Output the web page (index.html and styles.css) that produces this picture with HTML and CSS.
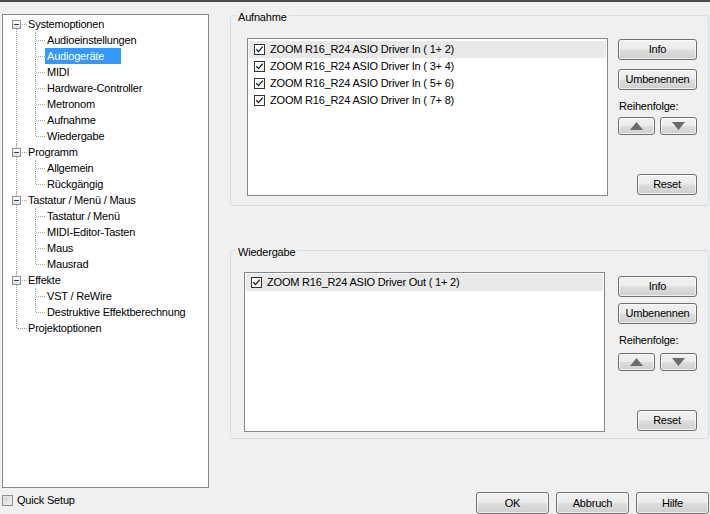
FILE: index.html
```html
<!DOCTYPE html>
<html lang="de">
<head>
<meta charset="utf-8">
<title>Optionen</title>
<link rel="stylesheet" href="styles.css">
</head>
<body>
<div class="topline"></div>
<div class="main">
  <div class="left">
    <ul class="tree">
      <li>
        <div class="row"><span class="exp"></span><span class="label">Systemoptionen</span></div>
        <ul class="children">
          <li><div class="row"><span class="label">Audioeinstellungen</span></div></li>
          <li><div class="row"><span class="label selected">Audiogeräte</span></div></li>
          <li><div class="row"><span class="label">MIDI</span></div></li>
          <li><div class="row"><span class="label">Hardware-Controller</span></div></li>
          <li><div class="row"><span class="label">Metronom</span></div></li>
          <li><div class="row"><span class="label">Aufnahme</span></div></li>
          <li><div class="row"><span class="label">Wiedergabe</span></div></li>
        </ul>
      </li>
      <li>
        <div class="row"><span class="exp"></span><span class="label">Programm</span></div>
        <ul class="children">
          <li><div class="row"><span class="label">Allgemein</span></div></li>
          <li><div class="row"><span class="label">Rückgängig</span></div></li>
        </ul>
      </li>
      <li>
        <div class="row"><span class="exp"></span><span class="label">Tastatur / Menü / Maus</span></div>
        <ul class="children">
          <li><div class="row"><span class="label">Tastatur / Menü</span></div></li>
          <li><div class="row"><span class="label">MIDI-Editor-Tasten</span></div></li>
          <li><div class="row"><span class="label">Maus</span></div></li>
          <li><div class="row"><span class="label">Mausrad</span></div></li>
        </ul>
      </li>
      <li>
        <div class="row"><span class="exp"></span><span class="label">Effekte</span></div>
        <ul class="children">
          <li><div class="row"><span class="label">VST / ReWire</span></div></li>
          <li><div class="row"><span class="label">Destruktive Effektberechnung</span></div></li>
        </ul>
      </li>
      <li>
        <div class="row"><span class="label">Projektoptionen</span></div>
      </li>
    </ul>
    <label class="quick"><span class="cb cb-plain"></span><span>Quick Setup</span></label>
  </div>

  <div class="right">
    <section class="group group-rec">
      <div class="group-title">Aufnahme</div>
      <div class="group-body">
        <div class="listbox">
          <div class="item sel"><span class="cb"><svg width="9" height="9" viewBox="0 0 9 9"><path d="M1.3 4.3 L3.5 6.6 L7.8 1.6" stroke="#1a1a1a" stroke-width="1.3" fill="none"/></svg></span>ZOOM R16_R24 ASIO Driver In ( 1+ 2)</div>
          <div class="item"><span class="cb"><svg width="9" height="9" viewBox="0 0 9 9"><path d="M1.3 4.3 L3.5 6.6 L7.8 1.6" stroke="#1a1a1a" stroke-width="1.3" fill="none"/></svg></span>ZOOM R16_R24 ASIO Driver In ( 3+ 4)</div>
          <div class="item"><span class="cb"><svg width="9" height="9" viewBox="0 0 9 9"><path d="M1.3 4.3 L3.5 6.6 L7.8 1.6" stroke="#1a1a1a" stroke-width="1.3" fill="none"/></svg></span>ZOOM R16_R24 ASIO Driver In ( 5+ 6)</div>
          <div class="item"><span class="cb"><svg width="9" height="9" viewBox="0 0 9 9"><path d="M1.3 4.3 L3.5 6.6 L7.8 1.6" stroke="#1a1a1a" stroke-width="1.3" fill="none"/></svg></span>ZOOM R16_R24 ASIO Driver In ( 7+ 8)</div>
        </div>
        <div class="side">
          <button class="btn">Info</button>
          <button class="btn btn-rename">Umbenennen</button>
          <div class="order-label">Reihenfolge:</div>
          <div class="arrows">
            <button class="btn arrow"><svg width="13" height="8" viewBox="0 0 13 8"><polygon points="0,8 6.5,0 13,8" fill="#6b6b6b"/></svg></button>
            <button class="btn arrow"><svg width="13" height="8" viewBox="0 0 13 8"><polygon points="0,0 13,0 6.5,8" fill="#6b6b6b"/></svg></button>
          </div>
          <button class="btn btn-reset">Reset</button>
        </div>
      </div>
    </section>

    <section class="group group-play">
      <div class="group-title">Wiedergabe</div>
      <div class="group-body">
        <div class="listbox">
          <div class="item sel"><span class="cb"><svg width="9" height="9" viewBox="0 0 9 9"><path d="M1.3 4.3 L3.5 6.6 L7.8 1.6" stroke="#1a1a1a" stroke-width="1.3" fill="none"/></svg></span>ZOOM R16_R24 ASIO Driver Out ( 1+ 2)</div>
        </div>
        <div class="side">
          <button class="btn">Info</button>
          <button class="btn btn-rename">Umbenennen</button>
          <div class="order-label">Reihenfolge:</div>
          <div class="arrows">
            <button class="btn arrow"><svg width="13" height="8" viewBox="0 0 13 8"><polygon points="0,8 6.5,0 13,8" fill="#6b6b6b"/></svg></button>
            <button class="btn arrow"><svg width="13" height="8" viewBox="0 0 13 8"><polygon points="0,0 13,0 6.5,8" fill="#6b6b6b"/></svg></button>
          </div>
          <button class="btn btn-reset">Reset</button>
        </div>
      </div>
    </section>

    <div class="dialog-buttons">
      <button class="btn">OK</button>
      <button class="btn">Abbruch</button>
      <button class="btn">Hilfe</button>
    </div>
  </div>
</div>
</body>
</html>
```

FILE: styles.css
```css
* { box-sizing: border-box; }
html, body { margin: 0; padding: 0; }
body {
  width: 710px;
  height: 514px;
  overflow: hidden;
  background: #f0f0f0;
  font-family: "Liberation Sans", Arial, sans-serif;
  font-size: 11px;
  line-height: 13px;
  letter-spacing: -0.2px;
  color: #000;
}
.topline { height: 2px; background: #4a4a4a; }
.main { display: flex; height: 512px; }

/* ---------- left: tree ---------- */
.left {
  width: 209px;
  padding: 12px 0 0 2px;
  display: flex;
  flex-direction: column;
}
.tree, .tree ul { list-style: none; margin: 0; padding: 0; }
.tree {
  height: 474px;
  padding-top: 1px;
  background: #fff;
  border: 1px solid #828790;
}
.tree li { position: relative; }
.row {
  position: relative;
  height: 16px;
  line-height: 16px;
  display: flex;
  white-space: nowrap;
}
.tree > li > .row { padding-left: 23px; }
.children > li > .row { padding-left: 42px; }
.label { padding: 0 2px; height: 16px; }
.label.selected { background: #3399ff; color: #fff; padding-right: 17px; }

/* connector lines */
.tree > li::before,
.children > li::before {
  content: "";
  position: absolute;
  top: 0;
  bottom: 0;
  border-left: 1px dotted #a0a0a0;
}
.tree > li::before { left: 13px; }
.children > li::before { left: 32px; }
.tree > li:first-child::before { top: 8px; }
.tree > li:last-child::before,
.children > li:last-child::before { bottom: auto; height: 8px; }

.tree > li > .row::before,
.children > li > .row::before {
  content: "";
  position: absolute;
  top: 8px;
  border-top: 1px dotted #a0a0a0;
}
.tree > li > .row::before { left: 14px; width: 10px; }
.children > li > .row::before { left: 33px; width: 9px; }

.exp {
  position: absolute;
  left: 9px;
  top: 4px;
  width: 9px;
  height: 9px;
  border: 1px solid #919191;
  background: linear-gradient(#ffffff, #e2e2e2);
  z-index: 1;
}
.exp::after {
  content: "";
  position: absolute;
  left: 1px;
  top: 3px;
  width: 5px;
  height: 1px;
  background: #2c3d5e;
}

/* checkboxes */
.cb {
  width: 11px;
  height: 11px;
  flex: none;
  border: 1px solid #333;
  background: #fff;
  display: flex;
  align-items: center;
  justify-content: center;
}
.cb-plain {
  border-color: #8e8f8f;
  background: linear-gradient(135deg, #cfcfcf, #f6f6f6);
  box-shadow: inset 0 0 0 1px #e6e6e6;
}
.quick {
  display: flex;
  align-items: center;
  height: 13px;
  margin-top: 6px;
  gap: 4px;
}

/* ---------- right: groups ---------- */
.right {
  margin-left: 21px;
  width: 479px;
  padding-top: 13px;
  display: flex;
  flex-direction: column;
}
.group {
  border: 1px solid #d5dfe5;
  border-radius: 3px;
}
.group-title {
  margin: -5px 0 0 5px;
  padding: 0 2px;
  width: max-content;
  background: #f0f0f0;
  line-height: 13px;
}
.group-body { display: flex; }
.group-rec .group-body { padding: 14px 11px 9px 16px; }
.group-play { margin-top: 44px; }
.group-play .group-body { padding: 13px 11px 6px 13px; }

.listbox {
  width: 361px;
  height: 158px;
  background: #fff;
  border: 1px solid #828790;
  padding: 2px 1px 1px;
}
.group-play .listbox { height: 160px; padding-top: 1px; }
.item {
  height: 17px;
  display: flex;
  align-items: center;
  padding-left: 5px;
  white-space: nowrap;
}
.item .cb { margin-right: 5px; }
.item.sel { background: #e9e9e9; }

.side {
  width: 79px;
  margin-left: 10px;
  display: flex;
  flex-direction: column;
  padding: 1px 0 1px;
}
.group-play .side { margin-left: 13px; padding-top: 4px; }

.btn {
  font: inherit;
  letter-spacing: inherit;
  color: #000;
  height: 21px;
  padding: 0;
  margin: 0;
  border: 1px solid #707070;
  border-radius: 3px;
  background: linear-gradient(#f2f2f2 0%, #ebebeb 48%, #dddddd 52%, #cfcfcf 100%);
  box-shadow: inset 0 0 0 1px rgba(255, 255, 255, 0.65);
  display: flex;
  align-items: center;
  justify-content: center;
}
.btn-rename { margin-top: 9px; }
.group-play .btn-rename { margin-top: 6px; }
.order-label { margin-top: 10px; padding-left: 1px; line-height: 13px; }
.arrows { display: flex; gap: 5px; margin-top: 4px; }
.group-play .arrows { margin-top: 6px; }
.arrow { width: 37px; height: 18px; }
.btn-reset { width: 60px; align-self: flex-end; margin-top: auto; }

.dialog-buttons {
  margin-top: auto;
  display: flex;
  justify-content: flex-end;
  gap: 7px;
}
.dialog-buttons .btn { width: 73px; height: 22px; }
```
